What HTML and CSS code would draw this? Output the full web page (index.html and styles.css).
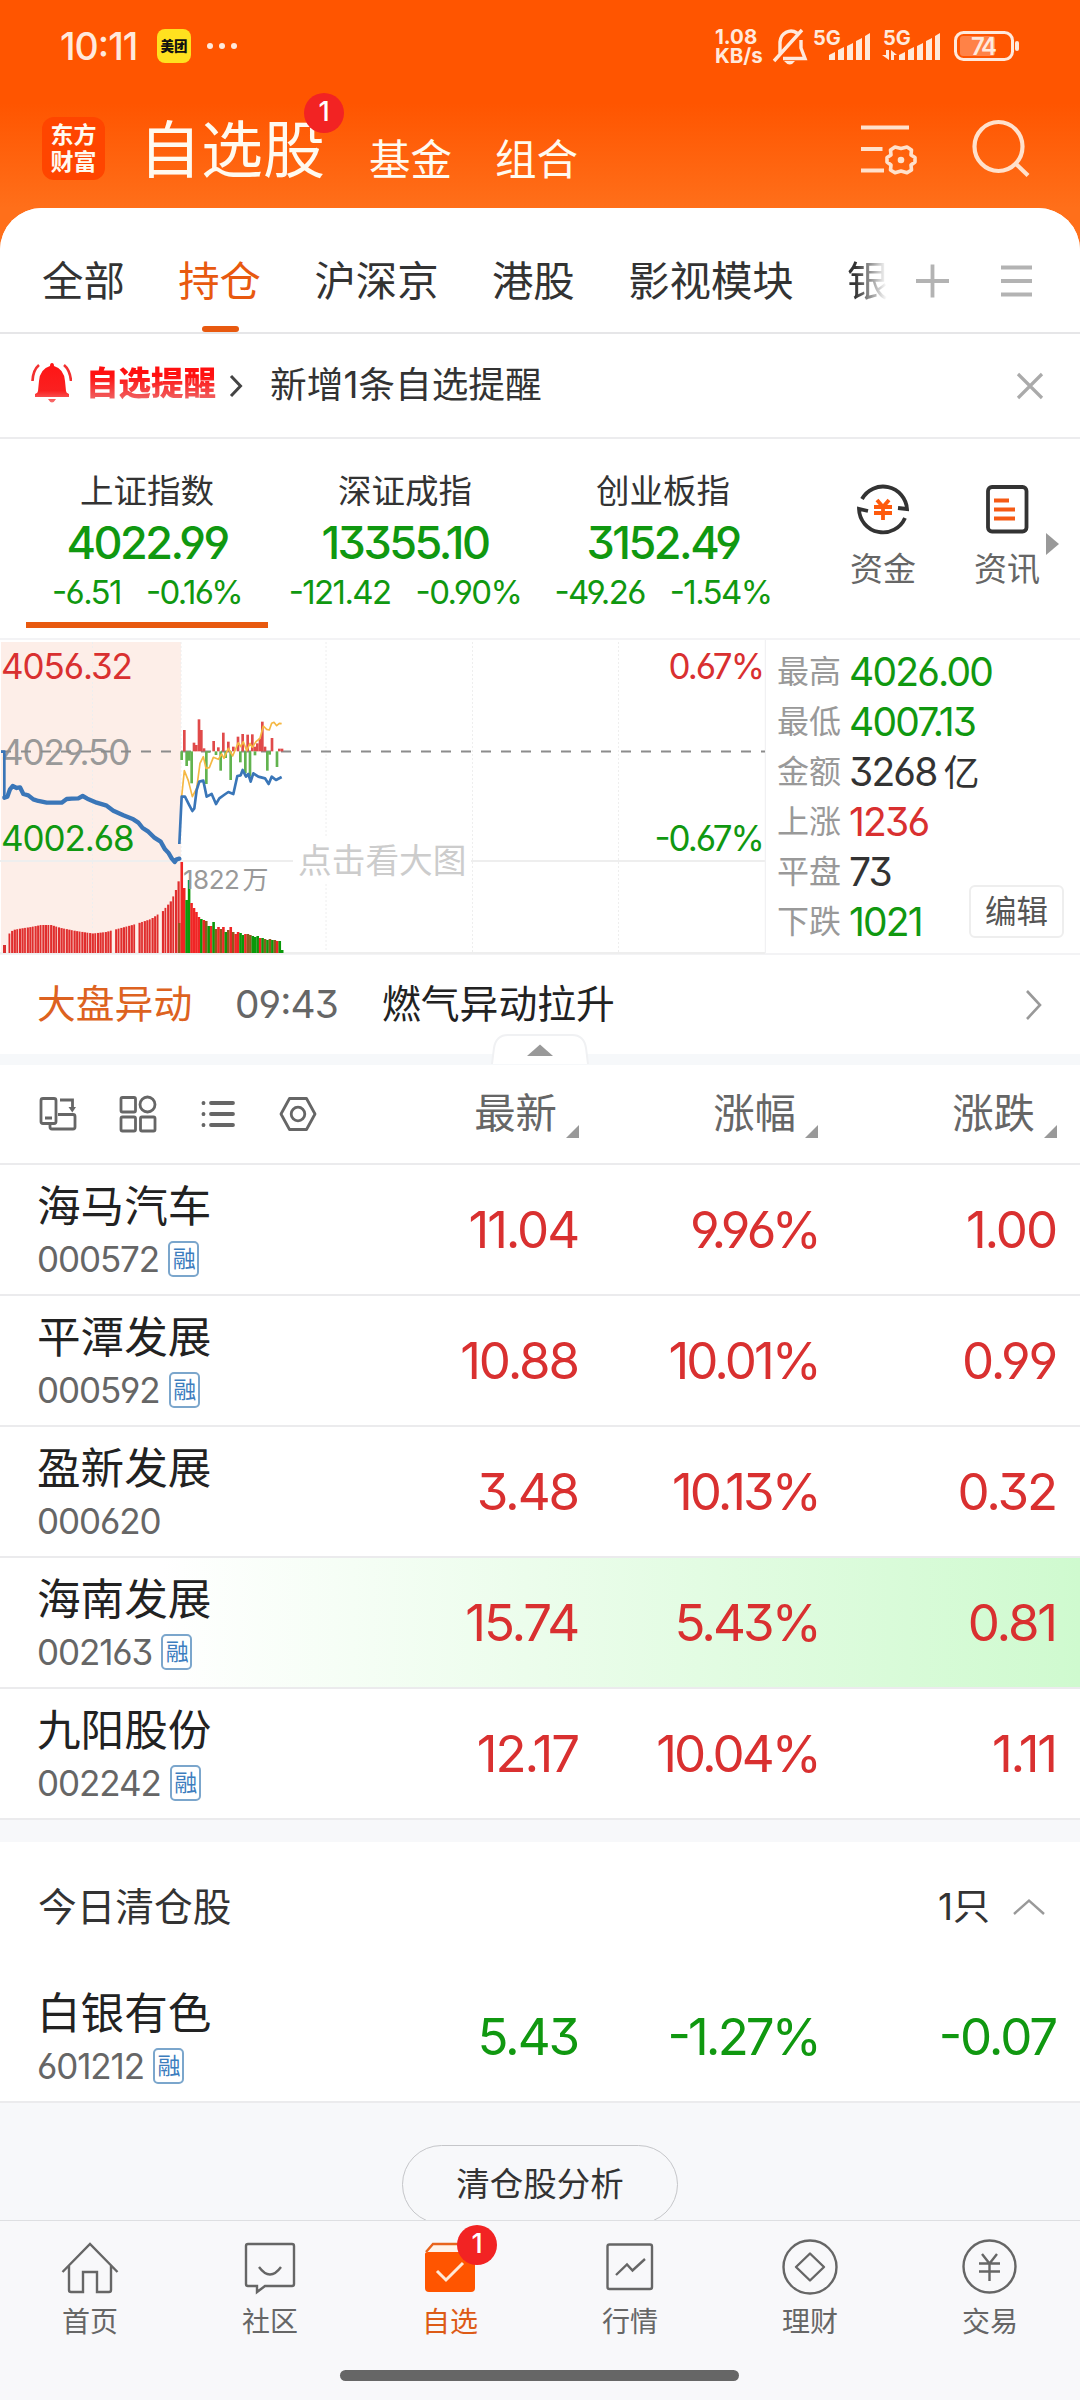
FILE: index.html
```html
<!DOCTYPE html>
<html lang="zh-CN">
<head>
    <meta charset="UTF-8">
    <meta name="viewport" content="width=device-width, initial-scale=1.0">
    <title>自选股</title>
    <link rel="stylesheet" href="styles.css">
</head>
<body>
    <div class="app">
        <header class="top">
            <div class="status-bar">
                <span class="clock">10:11</span>
                <span class="meituan">美团</span>
                <span class="dots"><i></i><i></i><i></i></span>
                <span class="speed">1.08<br>KB/s</span>
                <svg class="status-icons" width="250" height="44" viewBox="770 24 250 44" fill="none" stroke="#ffe9dc" stroke-width="3.4">
                    <path d="M780 54 V42 A11 12 0 0 1 797 33 M801 40 V48 L805 58.500 H783 M774 61 L802 30"/>
                    <path d="M784 61 H795 Q790 68 784 61 Z" fill="#ffe9dc" stroke="none"/>
                    <g fill="#ffe9dc" stroke="none">
                        <path d="M829 60 V55 L835 52 V60 Z M838 60 V50 L844 47 V60 Z M847 60 V46 L853 43 V60 Z M856 60 V41 L862 38 V60 Z M865 60 V36 L870 33 V60 Z"/>
                        <path d="M899 60 V55 L905 52 V60 Z M908 60 V50 L914 47 V60 Z M917 60 V46 L923 43 V60 Z M926 60 V41 L932 38 V60 Z M935 60 V36 L940 33 V60 Z"/>
                        <path d="M886 50 H889 V60 L882 55 H886 Z M891 50 L897 55 H894 V60 H891 Z"/>
                        <text x="813" y="44.500" class="net">5G</text>
                        <text x="883" y="44.500" class="net">5G</text>
                        <rect x="960" y="36" width="35" height="20" rx="3" fill="#ff8247"/>
                        <text x="971" y="54.500" class="level">74</text>
                        <rect x="1015" y="41" width="4" height="10" rx="2"/>
                    </g>
                    <rect x="955.500" y="32.500" width="57" height="27" rx="8" stroke-width="3"/>
                </svg>
            </div>
            <div class="title-bar">
                <div class="logo">东方<br>财富</div>
                <div class="main-title">自选股<span class="badge">1</span></div>
                <div class="sub-title">基金</div>
                <div class="sub-title">组合</div>
                <svg class="title-icons" width="180" height="64" viewBox="855 115 180 64" fill="none" stroke="#ffe1cc" stroke-width="4.200">
                    <path d="M861 127.500 H909 M861 149 H882.500 M861 170.500 H884"/>
                    <path d="M895 147 L901 148.500 L907 147 L911.500 150 L911 155 L915 157.500 V162 L911 165 L911.500 170 L907 172.800 L901 171 L895 172.800 L890.500 170 L891 165 L887 162 V157.500 L891 155 L890.500 150 Z" stroke-linejoin="round" stroke-width="3.600"/>
                    <circle cx="901" cy="160" r="3.300" fill="#ffe1cc" stroke="none"/>
                    <ellipse cx="998.500" cy="146.500" rx="24" ry="24.500"/>
                    <path d="M1015 163 L1028 175.500"/>
                </svg>
            </div>
        </header>

        <main class="panel">
            <nav class="tabs">
                <a>全部</a>
                <a class="active">持仓</a>
                <a>沪深京</a>
                <a>港股</a>
                <a>影视模块</a>
                <a class="cut">银</a>
                <svg class="tab-tools" width="116" height="34" viewBox="916 264 116 34" stroke="#b3b3b3" stroke-width="3.800" fill="none">
                    <path d="M916 281 H949 M932.500 264.500 V297.500 M1001 267.500 H1032 M1001 281 H1032 M1001 294.500 H1032"/>
                </svg>
            </nav>

            <div class="notice">
                <svg width="41" height="42" viewBox="31 362 41 42">
                    <defs>
                        <linearGradient id="bell" x1="0" y1="0" x2="0" y2="1">
                            <stop offset="0" stop-color="#ff1515"/>
                            <stop offset=".7" stop-color="#fa2020"/>
                            <stop offset="1" stop-color="#f77070"/>
                        </linearGradient>
                    </defs>
                    <path d="M52 363 Q54 363 54 366 Q64 369 65 381 L66 391 Q66 393 69 394 V397 H35 V394 Q38 393 38 391 L39 381 Q40 369 50 366 Q50 363 52 363 Z M48 399 H56 Q52 406 48 399 Z" fill="url(#bell)"/>
                    <path d="M39 365 Q33 370 32.500 381 M64 365 Q70 370 71 381" fill="none" stroke="#f23030" stroke-width="2.600"/>
                </svg>
                <span class="notice-tag">自选提醒</span>
                <svg class="notice-arrow" width="14" height="24" viewBox="0 0 14 24" fill="none" stroke="#444" stroke-width="3"><path d="M2 2 L11.500 12 L2 22"/></svg>
                <span class="notice-text">新增1条自选提醒</span>
                <svg class="notice-close" width="28" height="28" viewBox="0 0 28 28" fill="none" stroke="#aaa" stroke-width="3.200"><path d="M2 2 L26 26 M26 2 L2 26"/></svg>
            </div>

            <section class="indexes">
                <div class="index active">
                    <div class="index-name">上证指数</div>
                    <div class="index-value">4022.99</div>
                    <div class="index-diff"><span>-6.51</span><span>-0.16%</span></div>
                </div>
                <div class="index">
                    <div class="index-name">深证成指</div>
                    <div class="index-value">13355.10</div>
                    <div class="index-diff"><span>-121.42</span><span>-0.90%</span></div>
                </div>
                <div class="index">
                    <div class="index-name">创业板指</div>
                    <div class="index-value">3152.49</div>
                    <div class="index-diff"><span>-49.26</span><span>-1.54%</span></div>
                </div>
                <div class="shortcut first">
                    <svg width="54" height="54" viewBox="856 482 54 54" fill="none" stroke="#333" stroke-width="3.800">
                        <path d="M862 499 A24 24 0 0 1 907 509 L898 508 M905 518 A24 24 0 0 1 859 509 L868 511"/>
                        <path d="M877 500 L883 507 L889 500 M883 507 V520 M874 507 H892 M874 513 H892" stroke="#fe5a0c"/>
                    </svg>
                    <span>资金</span>
                </div>
                <div class="shortcut">
                    <svg width="54" height="54" viewBox="980 482 54 54" fill="none" stroke="#333" stroke-width="3.800">
                        <rect x="988" y="487" width="38.500" height="44.500" rx="4"/>
                        <path d="M994 500.500 H1009 M994 509.500 H1015 M994 518.500 H1015" stroke="#f55a14" stroke-width="4.200"/>
                    </svg>
                    <span>资讯</span>
                </div>
                <i class="more"></i>
            </section>

            <section class="market">
                <svg class="chart" width="766" height="315" viewBox="0 640 766 315">
                    <rect x="1" y="642" width="180" height="311" fill="#fdeee8"/>
                    <path d="M92.500 642 V953 M181 642 V953 M326 642 V837 M326 884 V953 M472.500 642 V953 M618.500 642 V953" stroke="#eeeeee" stroke-dasharray="2 2"/>
                    <path d="M0 861 H293 M471 861 H765 M0 953 H765" stroke="#eee" stroke-width="2" fill="none"/>
                    <path d="M765.500 640 V953" stroke="#f1f1f3" stroke-width="1.500"/>
                    <g class="labels">
                        <text x="1" y="678.500" class="up">4056.32</text>
                        <text x="1" y="764.500" class="flat">4029.50</text>
                        <text x="1" y="851" class="down">4002.68</text>
                        <text x="763" y="678.500" class="up end">0.67%</text>
                        <text x="763" y="851" class="down end">-0.67%</text>
                    </g>
                    <text x="298" y="873" class="hint">点击看大图</text>
                    <path d="M1 751.500 H765" stroke="#8c8c8c" stroke-width="2" stroke-dasharray="10 10"/>
                    <g id="volume"></g>
                    <text x="183" y="889" class="volume-label">1822<tspan dx="3">万</tspan></text>
                    <g transform="translate(0 630) scale(.33333)" fill="none" stroke-linejoin="round">
                        <g id="force"></g>
                        <path d="M545 500 553 422 565 452 577 500 590 475 600 400 610 380 618 415 628 413 640 382 655 388 665 372 672 385 685 355 698 378 715 338 722 350 730 335 740 362 750 340 757 352 768 335 780 325 790 288 800 298 808 300 815 280 822 277 830 287 838 280 845 281" stroke="#f5b843" stroke-width="5"/>
                        <path d="M3 365 H13 V503" stroke="#3a76b8" stroke-width="8"/>
                        <path d="M13 503 22 500 30 478 38 468 50 474 60 472 70 492 85 496 100 508 115 513 140 518 185 518 200 507 215 506 235 505 248 498 262 506 290 518 320 527 340 542 370 556 400 568 415 578 428 594 445 605 462 622 482 635 495 658 505 668 515 685 524 696 530 688 538 686" stroke="#3a76b8" stroke-width="13" stroke-linecap="round"/>
                        <path d="M538 642 545 500 555 500 565 520 577 543 583 535 590 480 598 455 610 452 620 500 635 492 648 522 658 505 672 495 685 486 700 492 712 438 722 436 728 420 738 440 745 432 752 455 760 430 775 440 795 445 806 462 815 440 828 450 845 441" stroke="#3a76b8" stroke-width="8"/>
                    </g>
                </svg>
                <div class="stats">
                    <div><label>最高</label><b class="down">4026.00</b></div>
                    <div><label>最低</label><b class="down">4007.13</b></div>
                    <div><label>金额</label><b>3268<small>亿</small></b></div>
                    <div><label>上涨</label><b class="up">1236</b></div>
                    <div><label>平盘</label><b>73</b></div>
                    <div><label>下跌</label><b class="down">1021</b></div>
                    <button class="edit">编辑</button>
                </div>
            </section>

            <section class="news">
                <span class="news-tag">大盘异动</span>
                <span class="news-time">09:43</span>
                <span class="news-text">燃气异动拉升</span>
                <svg width="18" height="32" viewBox="0 0 18 32" fill="none" stroke="#999" stroke-width="2.600"><path d="M2 2 L15 16 L2 30"/></svg>
                <div class="handle"><svg width="98" height="30" viewBox="0 0 98 30"><path d="M1 30 L3 14 Q5 1 17 1 H81 Q93 1 95 14 L97 30" fill="#fff" stroke="#f0f1f3" stroke-width="2"/><path d="M36 22 L49 10.500 L62 22 Z" fill="#999"/></svg></div>
            </section>

            <section class="stocks">
                <div class="row head">
                    <svg width="280" height="40" viewBox="38 1094 280 40" fill="none" stroke="#666" stroke-width="2.800">
                        <rect x="41" y="1098.500" width="15" height="25" rx="2"/>
                        <path d="M45 1118 H52 M60 1100 H72.500 V1109 M58 1114.500 H73 Q75 1114.500 75 1116.500 V1127 Q75 1129 73 1129 H52 Q50 1129 50 1127 V1123"/>
                        <path d="M68.500 1107 H76 L72.300 1112.500 Z" fill="#666" stroke="none"/>
                        <rect x="121" y="1097.500" width="14.500" height="14.500" rx="1.500"/><circle cx="147.500" cy="1104.500" r="7.500"/>
                        <rect x="121" y="1117" width="14.500" height="14" rx="1.500"/><rect x="140.500" y="1117" width="14.500" height="14" rx="1.500"/>
                        <path d="M211 1103 H233 M211 1114 H233 M211 1125 H233 M203.500 1102.800 V1103.200 M203.500 1113.800 V1114.200 M203.500 1124.800 V1125.200" stroke-width="3.800" stroke-linecap="round"/>
                        <path d="M289.500 1098.500 H306.500 L315 1114 L306.500 1129.500 H289.500 L281 1114 Z" stroke-linejoin="round"/><circle cx="298" cy="1114" r="6.800"/>
                    </svg>
                    <span class="sort">最新</span>
                    <span class="sort">涨幅</span>
                    <span class="sort">涨跌</span>
                </div>
                <div class="row">
                    <div class="stock"><div class="name">海马汽车</div><div class="code">000572<em>融</em></div></div>
                    <b class="up">11.04</b><b class="up percent">9.96%</b><b class="up">1.00</b>
                </div>
                <div class="row">
                    <div class="stock"><div class="name">平潭发展</div><div class="code">000592<em>融</em></div></div>
                    <b class="up">10.88</b><b class="up percent">10.01%</b><b class="up">0.99</b>
                </div>
                <div class="row">
                    <div class="stock"><div class="name">盈新发展</div><div class="code">000620</div></div>
                    <b class="up">3.48</b><b class="up percent">10.13%</b><b class="up">0.32</b>
                </div>
                <div class="row flash">
                    <div class="stock"><div class="name">海南发展</div><div class="code">002163<em>融</em></div></div>
                    <b class="up">15.74</b><b class="up percent">5.43%</b><b class="up">0.81</b>
                </div>
                <div class="row">
                    <div class="stock"><div class="name">九阳股份</div><div class="code">002242<em>融</em></div></div>
                    <b class="up">12.17</b><b class="up percent">10.04%</b><b class="up">1.11</b>
                </div>
            </section>

            <section class="cleared">
                <div class="cleared-head">
                    <span>今日清仓股</span>
                    <span class="count">1只</span>
                    <svg width="32" height="18" viewBox="0 0 32 18" fill="none" stroke="#999" stroke-width="2.400"><path d="M1 16 L16 2.500 L31 16"/></svg>
                </div>
                <div class="row">
                    <div class="stock"><div class="name">白银有色</div><div class="code">601212<em>融</em></div></div>
                    <b class="down">5.43</b><b class="down percent">-1.27%</b><b class="down">-0.07</b>
                </div>
            </section>

            <div class="analysis"><button>清仓股分析</button></div>
        </main>

        <footer class="bottom">
            <nav class="bottom-nav">
                <a>
                    <svg width="60" height="60" viewBox="60 2238 60 60"><path d="M62.500 2272 L90 2244 L117.500 2272 M69 2266 V2290 Q69 2292 71 2292 H83 V2272 H97 V2292 H109 Q111 2292 111 2290 V2266"/></svg>
                    <span>首页</span>
                </a>
                <a>
                    <svg width="60" height="60" viewBox="240 2238 60 60"><path d="M248 2244 H292 Q294 2244 294 2246 V2284 Q294 2286 292 2286 H265 L257 2292 V2286 H248 Q246 2286 246 2284 V2246 Q246 2244 248 2244 Z M259 2267 Q270 2282 281 2267"/></svg>
                    <span>社区</span>
                </a>
                <a class="active">
                    <svg width="60" height="60" viewBox="420 2238 60 60">
                        <path d="M426 2252 L433 2244 H468 L474 2252" fill="#fff3e8" stroke="#e8641c"/>
                        <path d="M425 2254 Q425 2252 428 2252 H475 V2288 Q475 2292 471 2292 H429 Q425 2292 425 2288 Z" fill="#ff5500" stroke="none"/>
                        <path d="M437 2271 L446 2280 L463 2263" stroke="#ffe9d6" stroke-width="3"/>
                    </svg>
                    <span>自选</span>
                    <i class="badge">1</i>
                </a>
                <a>
                    <svg width="60" height="60" viewBox="600 2238 60 60"><rect x="607.500" y="2244.500" width="44.500" height="44.500" rx="2"/><path d="M616 2275 L627 2264.500 L632.500 2270.500 L645 2259"/></svg>
                    <span>行情</span>
                </a>
                <a>
                    <svg width="60" height="60" viewBox="780 2238 60 60"><circle cx="810" cy="2267" r="26.500"/><path d="M810 2253.500 L824 2267 L810 2280.500 L796 2267 Z" stroke-linejoin="round"/></svg>
                    <span>理财</span>
                </a>
                <a>
                    <svg width="60" height="60" viewBox="960 2238 60 60"><circle cx="989.500" cy="2266.500" r="26"/><path d="M982 2254 L989.500 2263.500 L997 2254 M989.500 2263 V2281 M979 2263.500 H1000 M979 2271.500 H1000"/></svg>
                    <span>交易</span>
                </a>
            </nav>
            <div class="home-bar"></div>
        </footer>
    </div>

    <script>
        const NS = 'http://www.w3.org/2000/svg';

        function addBar(group, x, y, width, height, color) {
            const bar = document.createElementNS(NS, 'rect');
            bar.setAttribute('x', x);
            bar.setAttribute('y', y);
            bar.setAttribute('width', width);
            bar.setAttribute('height', height);
            bar.setAttribute('fill', color);
            group.appendChild(bar);
        }

        // Volume before the opening: [x, height] key points, the rest is interpolated
        const volume = document.getElementById('volume');
        const auction = [[9, 20], [12, 23], [20, 24.5], [30, 26], [40, 28], [50, 28], [60, 25], [75, 22], [92, 19.5], [105, 21], [120, 25], [135, 29], [150, 34], [162, 42], [170, 52], [174, 60], [177, 70]];
        addBar(volume, 3, 945, 3, 8, '#d92f2f');
        for (let i = 0, x = 8.5; x < 179; i++, x += 2.6) {
            let k = 1;
            while (k < auction.length - 1 && auction[k][0] < x) k++;
            const [x0, h0] = auction[k - 1];
            const [x1, h1] = auction[k];
            const h = h0 + (h1 - h0) * (x - x0) / (x1 - x0);
            if (i % 9 !== 4 || x < 90) {
                addBar(volume, x, 953 - h, i % 3 ? 2.2 : 1.8, h, '#e02d2d');
            }
        }

        // Volume after the opening, one bar a minute
        const session = [30, 91, 65, 53, 73, 50, 45, 41, 36, 34, 33, 32, 27, 27, 31, 24, 26, 24, 26, 21, 23, 26, 21, 19, 21, 20, 18, 19, 19, 18, 17, 16, 17, 15, 15, 14, 13, 14, 13, 13, 12, 12, 3];
        const colors = 'mrrggrrrrgrmgrgmrmrgmrmrrggrmmgggrgmgmgmrg';
        const palette = { r: '#f02525', g: '#0a990a', m: '#8c5a1c' };
        session.forEach((h, i) => {
            addBar(volume, 178 + i * 2.45, 953 - h, 2.6, h, palette[colors[i] || 'g']);
        });

        // Buying and selling force around the dashed line
        const force = document.getElementById('force');
        [[553, 300], [582, 338], [589, 345], [597, 268], [604, 300], [612, 355], [641, 333], [655, 352], [670, 308], [685, 335], [700, 350], [714, 320], [728, 312], [743, 314], [757, 313], [765, 350], [772, 340], [780, 325], [787, 275], [795, 350], [816, 324], [838, 356], [846, 356]]
            .forEach(([x, y]) => addBar(force, x - 4, y, 8, 364 - y, '#e04a4a'));
        [[545, 390], [560, 408], [568, 392], [575, 460], [619, 462], [626, 368], [648, 375], [662, 422], [677, 384], [692, 450], [721, 397], [736, 430], [750, 440], [765, 376], [802, 422], [809, 374], [831, 411]]
            .forEach(([x, y]) => addBar(force, x - 4, 364, 8, y - 364, '#62b34f'));
    </script>
</body>
</html>
```
FILE: styles.css
```css
* {
    box-sizing: border-box;
}
body {
    margin: 0;
    background: #f7f8fa;
    color: #333;
    font-family: Inter, "Noto Sans CJK SC", sans-serif;
    font-feature-settings: "cv03", "cv04", "cv09", "case";
    line-height: 1.2;
}
b, em, i {
    font-weight: normal;
    font-style: normal;
}
svg {
    display: block;
    flex: none;
}
.app {
    width: 1080px;
    height: 2400px;
    display: flex;
    flex-direction: column;
    overflow: hidden;
    background: linear-gradient(#ff5500 0, #ff5500 103px, #ff6f1a 208px, #ff6f1a 300px, #f7f8fa 300px);
}
.up { color: #d93030; fill: #d93030; }
.down { color: #109810; fill: #109810; }
.flat { fill: #999; }

/* header */
.top {
    height: 208px;
    flex: none;
    color: #fffaf0;
}
.status-bar {
    height: 92px;
    padding-left: 60px;
    display: flex;
    align-items: center;
    color: #ffe9dc;
}
.clock {
    width: 97px;
    font-size: 37.5px;
    font-weight: 500;
    letter-spacing: -1px;
}
.meituan {
    width: 34px;
    height: 34px;
    border-radius: 8px;
    background: #ffe11f;
    color: #111;
    font-size: 13.5px;
    font-weight: 900;
    line-height: 34px;
    text-align: center;
}
.dots {
    display: flex;
    gap: 6px;
    margin-left: 16px;
}
.dots i {
    width: 6px;
    height: 6px;
    border-radius: 50%;
    background: #ffe9dc;
}
.speed {
    width: 55px;
    margin-left: 478px;
    font-size: 20.5px;
    font-weight: 700;
    line-height: 19px;
}
.net {
    font-size: 20px;
    font-weight: 700;
}
.level {
    font-size: 24px;
    font-weight: 600;
    letter-spacing: -2.5px;
}
.title-bar {
    height: 116px;
    padding-left: 42px;
    display: flex;
}
.logo {
    width: 63px;
    height: 63px;
    margin-top: 25px;
    padding-top: 5px;
    border-radius: 12px;
    background: #ff4500;
    font-size: 23px;
    font-weight: 700;
    line-height: 27px;
    text-align: center;
}
.main-title {
    position: relative;
    margin: 23px 0 0 34px;
    width: 187px;
    font-size: 62px;
    line-height: 72px;
}
.badge {
    position: absolute;
    left: 165px;
    top: -22px;
    width: 40px;
    height: 40px;
    border-radius: 50%;
    background: #f22323;
    color: #fff;
    font-size: 27px;
    font-weight: 500;
    line-height: 38px;
    text-align: center;
}
.sub-title {
    width: 83px;
    margin: 43px 0 0 43px;
    font-size: 41.5px;
    line-height: 50px;
}
.title-icons {
    margin: 23px 0 0 277px;
}

/* white panel */
.panel {
    height: 2012px;
    flex: none;
    overflow: hidden;
    border-radius: 42px 42px 0 0;
    background: #f7f8fa;
}
.tabs {
    height: 126px;
    padding: 20px 0 0 42px;
    display: flex;
    gap: 53.4px;
    border-bottom: 2px solid #e6e6e8;
    background: #fff;
    font-size: 41.4px;
    line-height: 106px;
    white-space: nowrap;
}
.tabs .active {
    position: relative;
    color: #e8590f;
}
.tabs .active::after {
    content: "";
    position: absolute;
    left: 24px;
    bottom: 0;
    width: 37px;
    height: 6px;
    border-radius: 3px;
    background: #e8590f;
}
.tabs .cut {
    width: 42px;
    background: linear-gradient(90deg, #333 20%, #fff 95%);
    background-clip: text;
    color: transparent;
}
.tab-tools {
    margin: 36px 0 0 -27px;
}
.notice {
    height: 105px;
    padding-left: 31px;
    display: flex;
    align-items: center;
    border-bottom: 2px solid #ececee;
    background: #fff;
}
.notice > svg:first-child {
    margin-top: -6px;
}
.notice-tag {
    width: 132px;
    margin: -4px 0 0 14px;
    background: linear-gradient(#ff1010 30%, #f06060 90%);
    background-clip: text;
    color: transparent;
    font-size: 32.5px;
    font-weight: 900;
}
.notice-arrow {
    margin-left: 11px;
}
.notice-text {
    margin-left: 27px;
    font-size: 36.7px;
}
.notice-close {
    margin-left: auto;
    margin-right: 36px;
}

/* indexes */
.indexes {
    height: 201px;
    padding-left: 18px;
    display: flex;
    border-bottom: 2px solid #f3f3f5;
    background: #fff;
    position: relative;
}
.index {
    width: 258px;
    padding-top: 31px;
    text-align: center;
}
.index.active {
    background: linear-gradient(#e8590f, #e8590f) 8px 183px / 242px 6px no-repeat;
}
.index-name {
    font-size: 33.5px;
    line-height: 42px;
}
.index-value {
    color: #109810;
    font-size: 45px;
    font-weight: 500;
    letter-spacing: -2.5px;
    line-height: 61px;
}
.index-diff {
    display: flex;
    justify-content: center;
    gap: 25px;
    color: #109810;
    font-size: 33px;
    letter-spacing: -1.6px;
    line-height: 38px;
}
.shortcut {
    width: 124px;
    padding-top: 43px;
    display: flex;
    flex-direction: column;
    align-items: center;
    color: #666;
    font-size: 33px;
    line-height: 48px;
}
.shortcut span {
    margin-top: 9px;
}
.shortcut.first {
    margin-left: 29px;
}
.more {
    position: absolute;
    left: 1046px;
    top: 94px;
    border: 11px solid transparent;
    border-left: 13px solid #999;
    border-right: 0;
}

/* chart and figures */
.market {
    height: 315px;
    display: flex;
    background: #fff;
    border-bottom: 2px solid #f3f3f5;
}
.labels {
    font-size: 35px;
    letter-spacing: -1.1px;
}
.end {
    text-anchor: end;
    letter-spacing: -2px;
}
.hint {
    fill: #ccc;
    font-size: 33.7px;
}
.volume-label {
    fill: #999;
    font-size: 26px;
    letter-spacing: -.5px;
}
.stats {
    position: relative;
    flex: 1;
    padding: 7px 0 0 11px;
}
.stats div {
    display: flex;
    height: 50px;
    line-height: 50px;
}
.stats label {
    width: 72px;
    color: #999;
    font-size: 32px;
}
.stats b {
    font-size: 39px;
    letter-spacing: -1.8px;
}
.stats small {
    margin-left: 7px;
    font-size: 36px;
}
.edit {
    position: absolute;
    left: 203px;
    top: 245px;
    width: 95px;
    height: 53px;
    padding: 0;
    border: 2px solid #eee;
    border-radius: 6px;
    background: #fff;
    color: #555;
    font: inherit;
    font-size: 31.5px;
    line-height: 46px;
}
.news {
    position: relative;
    height: 110px;
    padding: 0 37px;
    display: flex;
    align-items: center;
    border-bottom: 11px solid #f6f8fa;
    background: #fff;
    color: #222;
    font-size: 38.8px;
}
.news-tag {
    width: 198px;
    color: #dd6220;
}
.news-time {
    width: 147px;
    color: #666;
    letter-spacing: -.9px;
}
.news > svg {
    margin-left: auto;
}
.handle {
    position: absolute;
    left: 491px;
    top: 79px;
}

/* stock table */
.row {
    height: 131px;
    padding-left: 37px;
    display: grid;
    grid-template-columns: 301px 240px 241px 237px;
    align-items: center;
    border-bottom: 2px solid #ebebed;
    background: #fff;
}
.row b {
    font-size: 51px;
    letter-spacing: -2.1px;
    text-align: right;
}
.row .percent {
    letter-spacing: -2.9px;
}
.row.head {
    height: 100px;
    padding-left: 38px;
    grid-template-columns: 280px 260px 239px 239px;
}
.sort {
    position: relative;
    padding-right: 21px;
    color: #666;
    font-size: 41.4px;
    text-align: right;
}
.sort::after {
    content: "";
    position: absolute;
    right: -1px;
    bottom: 1px;
    border-left: 13px solid transparent;
    border-bottom: 13px solid #999;
}
.row.flash {
    background: linear-gradient(90deg, #fff 15%, #cffacf 100%);
}
.name {
    color: #222;
    font-size: 43.6px;
    line-height: 54px;
}
.code {
    height: 46px;
    padding-top: 4px;
    display: flex;
    align-items: center;
    color: #666;
    font-size: 35px;
    letter-spacing: -1.1px;
}
.code em {
    width: 31px;
    height: 36px;
    margin-left: 9px;
    border: 2px solid #7ba6cc;
    border-radius: 5px;
    color: #3c7dbe;
    font-size: 23px;
    line-height: 32px;
    text-align: center;
}
.cleared {
    margin-top: 22px;
}
.cleared-head {
    height: 130px;
    padding: 0 35px 0 38px;
    display: flex;
    align-items: center;
    background: #fff;
    font-size: 38.7px;
}
.count {
    margin: 0 23px 0 auto;
    font-size: 37px;
}
.analysis {
    padding-top: 42px;
    text-align: center;
}
.analysis button {
    width: 276px;
    height: 79px;
    border: 1.5px solid #c5c6c9;
    border-radius: 40px;
    background: none;
    color: #333;
    font: inherit;
    font-size: 33.5px;
}

/* bottom bar */
.bottom {
    flex: 1;
    border-top: 1px solid #dedfe2;
    background: #f8f8fa;
}
.bottom-nav {
    height: 149px;
    display: flex;
}
.bottom-nav a {
    position: relative;
    width: 180px;
    padding-top: 17px;
    display: flex;
    flex-direction: column;
    align-items: center;
    color: #666;
    font-size: 28px;
    line-height: 40px;
}
.bottom-nav svg {
    fill: none;
    stroke: #666;
    stroke-width: 2.4;
}
.bottom-nav span {
    margin-top: 4px;
}
.bottom-nav .active {
    color: #dd5b16;
}
.bottom-nav .badge {
    left: 97px;
    top: 4px;
}
.home-bar {
    width: 399px;
    height: 11px;
    margin: 0 0 0 340px;
    border-radius: 6px;
    background: #666;
}
```
